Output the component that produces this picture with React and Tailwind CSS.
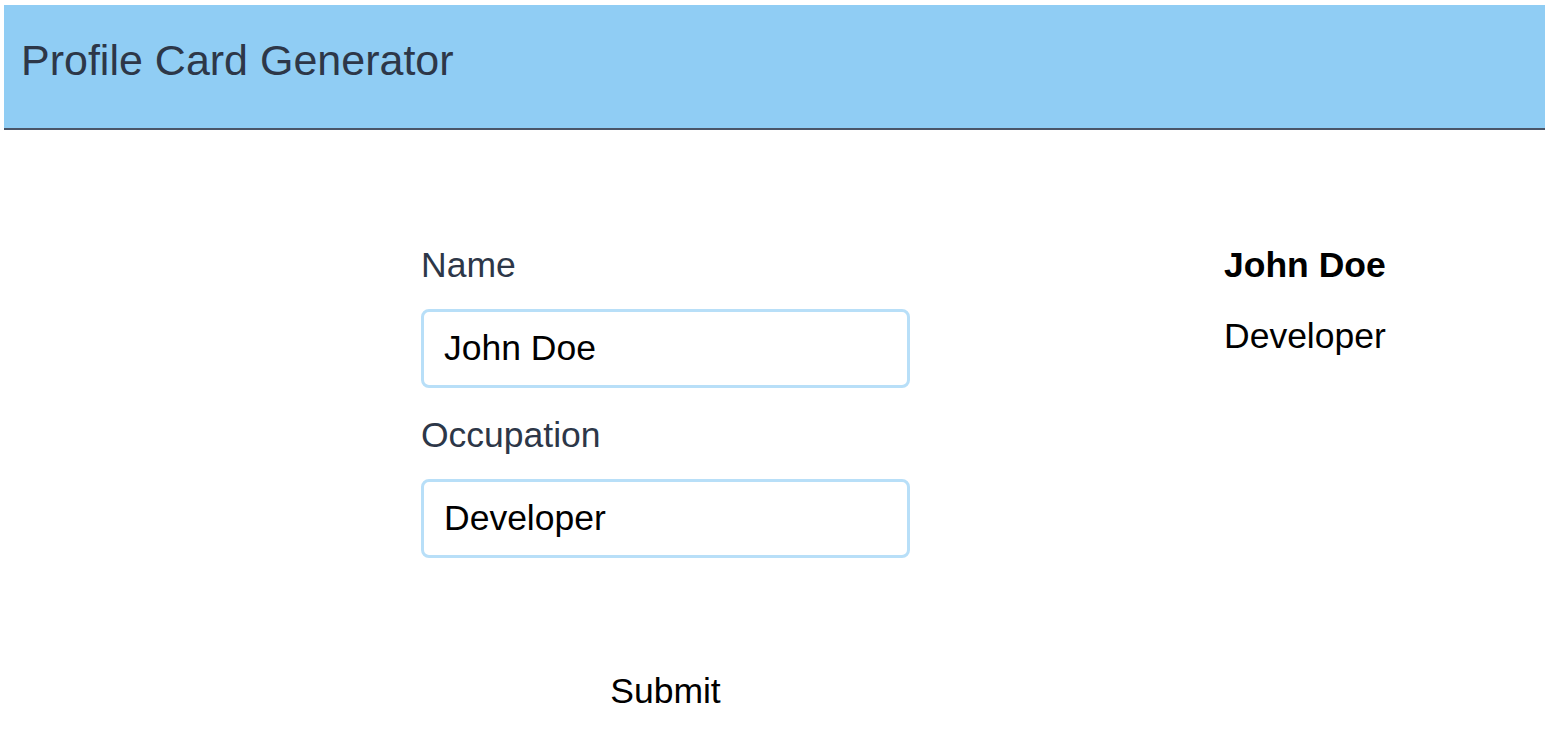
import { useState } from 'react'

export default function App() {
  const [name, setName] = useState('John Doe')
  const [occupation, setOccupation] = useState('Developer')

  return (
    <div className="min-h-screen bg-white pt-[5px] pl-[4px] font-['Liberation_Sans',Arial,sans-serif]">
      {/* Header */}
      <header className="h-[125px] bg-[#90cdf4] border-b-2 border-[#4a5568] pl-[17px] pt-[31px]">
        <h1 className="text-[43px] leading-[48px] text-[#2d3748]">Profile Card Generator</h1>
      </header>

      <div className="flex ml-[417px] mt-[115px] gap-[314px]">
        {/* Form */}
        <form className="w-[489px] flex flex-col" onSubmit={(e) => e.preventDefault()}>
          <label className="text-[35.5px] leading-[40px] text-[#2d3748] mb-[24px]">Name</label>
          <input
            value={name}
            onChange={(e) => setName(e.target.value)}
            className="h-[79px] border-[3px] border-[#b8dff8] rounded-lg px-[20px] text-[35.5px] text-black outline-none mb-[27px]"
          />
          <label className="text-[35.5px] leading-[40px] text-[#2d3748] mb-[24px]">Occupation</label>
          <input
            value={occupation}
            onChange={(e) => setOccupation(e.target.value)}
            className="h-[79px] border-[3px] border-[#b8dff8] rounded-lg px-[20px] text-[35.5px] text-black outline-none"
          />
          <button type="submit" className="self-center mt-[113px] text-[35.5px] leading-[40px] text-black">
            Submit
          </button>
        </form>

        {/* Preview */}
        <div className="flex flex-col">
          <p className="text-[35.5px] leading-[40px] font-bold text-black">{name}</p>
          <p className="text-[35.5px] leading-[40px] text-black mt-[31px]">{occupation}</p>
        </div>
      </div>
    </div>
  )
}
